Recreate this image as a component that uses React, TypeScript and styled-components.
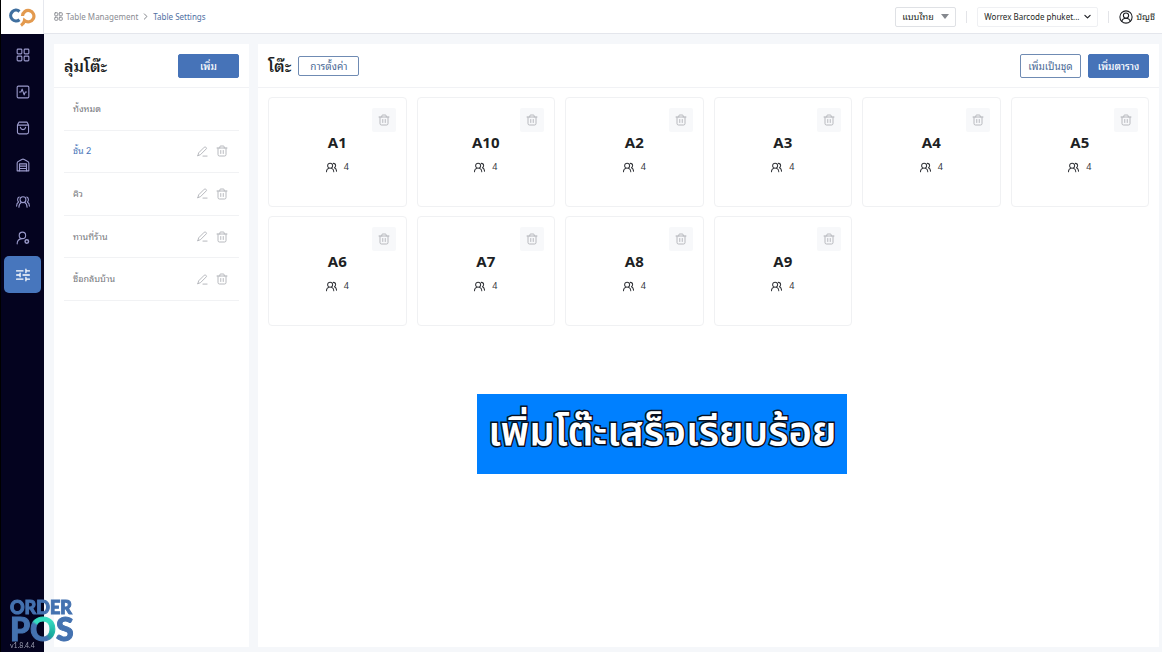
import React from "react";
import styled, { createGlobalStyle, css } from "styled-components";

const blue = "#4673b8";
const sans = `Lato, "Noto Sans Thai Looped", Loma, Waree, "Noto Sans Thai", "Noto Sans", sans-serif`;
const display = `"Noto Sans", "Noto Sans Thai", sans-serif`;

const GlobalStyle = createGlobalStyle`
  *, *::before, *::after { box-sizing: border-box; }
  body { margin: 0; background: #f5f7fa; color: #1d1f24; font: 9px/14px ${sans}; }
  button, select { font: inherit; color: inherit; cursor: pointer; }
  h1, h2, h3, p, ul, ol { margin: 0; padding: 0; }
  ul, ol { list-style: none; }
  a { color: inherit; text-decoration: none; }
`;

const Shell = styled.div`
  display: grid;
  grid-template-columns: 44px minmax(0, 1fr);
  min-height: 100vh;
`;

const Sidebar = styled.aside`
  display: flex;
  flex-direction: column;
  background: #04031f;
  border-left: 1px solid #000;
`;

const Brand = styled.a`
  display: flex;
  align-items: center;
  justify-content: center;
  height: 34px;
  background: #fff;
  border-right: 1px solid #e6e8ee;
`;

const Nav = styled.nav`
  display: grid;
  grid-auto-rows: 1fr;
  height: 256px;
  margin: 3px 3px 0;
`;

const NavLink = styled.a<{ $active?: boolean }>`
  display: flex;
  align-items: center;
  justify-content: center;
  border-radius: 5px;
  color: ${(p) => (p.$active ? "#fff" : "#9a9acb")};
  background: ${(p) => (p.$active ? "#4776bd" : "transparent")};
`;

const Column = styled.div`
  display: flex;
  flex-direction: column;
`;

const TopBar = styled.header`
  display: flex;
  align-items: center;
  justify-content: space-between;
  height: 34px;
  padding: 0 7px 0 10px;
  background: #fff;
  border-bottom: 1px solid #e4e6ec;
`;

const Crumbs = styled.nav`
  display: flex;
  align-items: center;
  gap: 4px;
  color: #6f7279;
  font-family: ${display};
  font-size: 8px;
`;

const Crumb = styled.a<{ $current?: boolean }>`
  display: flex;
  align-items: center;
  gap: 3px;
  color: ${(p) => (p.$current ? "#4f70a3" : "#8a8c92")};
`;

const Tools = styled.div`
  display: flex;
  align-items: center;
  gap: 10px;
`;

const Divider = styled.span`
  width: 1px;
  height: 12px;
  background: #e3e4e8;
`;

const Picker = styled.label<{ $wide?: boolean }>`
  display: grid;
  align-items: center;
  width: ${(p) => (p.$wide ? "121px" : "61px")};
  height: 20px;
  border: 1px solid ${(p) => (p.$wide ? "#eff0f3" : "#dfe1e5")};
  border-radius: 2px;
  ${(p) => p.$wide && css`font-family: ${display}; font-size: 8px;`}

  select, svg { grid-area: 1 / 1; }
  select {
    width: 100%;
    height: 18px;
    padding: 0 14px 0 6px;
    border: 0;
    background: transparent;
    appearance: none;
    text-overflow: ellipsis;
  }
  svg { justify-self: end; margin-right: 6px; pointer-events: none; }
`;

const Account = styled.button`
  display: flex;
  align-items: center;
  gap: 3px;
  padding: 0;
  border: 0;
  background: none;
`;

const Panels = styled.main`
  display: grid;
  grid-template-columns: 195px minmax(0, 1fr);
  flex: 1;
  gap: 9px;
  padding: 10px 3px 5px 10px;
`;

const Panel = styled.section`
  background: #fff;
`;

const PanelHead = styled.div`
  display: flex;
  align-items: center;
  justify-content: space-between;
  height: 44px;
  padding: 0 10px;
  border-bottom: 1px solid #f1f2f5;
`;

const HeadGroup = styled.div`
  display: flex;
  align-items: center;
  gap: 7px;
`;

const Title = styled.h2`
  font-size: 16px;
  line-height: 20px;
  font-weight: 600;
`;

const Button = styled.button<{ $outline?: boolean; $low?: boolean }>`
  width: 61px;
  height: ${(p) => (p.$low ? "20px" : "24px")};
  padding: 0;
  border: 1px solid ${blue};
  border-radius: 2px;
  font-size: 10px;
  white-space: nowrap;
  ${(p) =>
    p.$outline
      ? css`background: #fff; color: #4a6a96; border-color: #6f8bb3;`
      : css`background: ${blue}; color: #fff; font-weight: 500;`}
`;

const Groups = styled.ul`
  display: grid;
  grid-auto-rows: 1fr;
  height: 213px;
  padding: 0 10px;
`;

const GroupRow = styled.li`
  display: flex;
  align-items: center;
  gap: 6px;
  padding: 0 10px 0 9px;
  border-bottom: 1px solid #f1f2f4;
`;

const GroupName = styled.a<{ $active?: boolean }>`
  flex: 1;
  color: ${(p) => (p.$active ? blue : "#75777c")};
`;

const IconButton = styled.button`
  display: flex;
  align-items: center;
  justify-content: center;
  width: 14px;
  height: 14px;
  padding: 0;
  border: 0;
  background: none;
  color: #b0b2b8;
`;

const Cards = styled.ul`
  display: grid;
  grid-template-columns: repeat(6, minmax(0, 1fr));
  gap: 9px 10px;
  padding: 9px 10px;
`;

const Card = styled.li`
  display: flex;
  flex-direction: column;
  align-items: center;
  height: 110px;
  padding: 10px;
  border: 1px solid #f0f1f3;
  border-radius: 4px;
`;

const DeleteButton = styled(IconButton)`
  align-self: flex-end;
  width: 24px;
  height: 24px;
  border-radius: 2px;
  background: #f7f8fa;
`;

const TableName = styled.h3`
  font-family: ${display};
  font-size: 15px;
  line-height: 20px;
  font-weight: 700;
`;

const Seats = styled.p`
  display: flex;
  align-items: center;
  gap: 7px;
  margin-top: 8px;
  color: #33353a;
  font-family: ${display};
`;

const Caption = styled.p`
  position: fixed;
  top: 394px;
  left: 57%;
  width: 370px;
  height: 80px;
  transform: translateX(-50%);
  background: #0080ff;
  color: #fff;
  font-family: ${display};
  font-size: 40px;
  line-height: 74px;
  font-weight: 600;
  text-align: center;
  white-space: nowrap;
  -webkit-text-stroke: 3px #071021;
  paint-order: stroke fill;
`;

const Watermark = styled.div`
  position: fixed;
  left: 10px;
  bottom: 9px;
  display: flex;
  flex-direction: column;
  color: #4472b0;
  font-family: Lato, sans-serif;
  font-weight: 900;
  -webkit-text-stroke: 1px currentColor;
`;

const MarkTop = styled.span`
  font-size: 18px;
  line-height: 16px;
`;

const MarkBottom = styled.span`
  font-size: 32px;
  line-height: 28px;
`;

const MarkRing = styled.span`
  background: conic-gradient(from -50deg, #35dcc0 0 25%, #17a99d 50%, #4472b0 58% 96%, #35dcc0);
  background-clip: text;
  color: transparent;
`;

const Version = styled.small`
  position: fixed;
  left: 10px;
  bottom: 2px;
  color: #9d9fb2;
  font-size: 7px;
  line-height: 10px;
`;

type IconProps = { size?: number; children: React.ReactNode; weight?: number };

const Icon = ({ size = 14, weight = 1.5, children }: IconProps) => (
  <svg width={size} height={size} viewBox="0 0 24 24" fill="none" stroke="currentColor"
    strokeWidth={weight} strokeLinecap="round" strokeLinejoin="round" aria-hidden="true">
    {children}
  </svg>
);

const grid = (
  <>
    <rect x="2" y="2" width="8" height="8" rx="1.500" />
    <rect x="14" y="2" width="8" height="8" rx="1.500" />
    <rect x="2" y="14" width="8" height="8" rx="1.500" />
    <rect x="14" y="14" width="8" height="8" rx="1.500" />
  </>
);

const Trash = () => (
  <Icon size={12} weight={1.8}>
    <path d="M2 6h20M7.500 6V4a2 2 0 0 1 2-2h5a2 2 0 0 1 2 2v2M4 6v13a3 3 0 0 0 3 3h10a3 3 0 0 0 3-3V6M9.500 11v6M14.500 11v6" />
  </Icon>
);

const Pencil = () => (
  <Icon size={11} weight={2}>
    <path d="M2 21l1.500-6L16 2.500a2 2 0 0 1 3 0l1 1a2 2 0 0 1 0 3L7.500 19 2 21zM13 22h9" />
  </Icon>
);

const People = () => (
  <Icon size={11} weight={2.2}>
    <circle cx="9" cy="8" r="5.500" />
    <path d="M1 21c0-4 2-6.500 5-7.500M12 13.500c3 1 5 3.500 5 7.500M16 3c3.500 0 5 2 5 4.500 0 2.500-1 4-2.500 5 3 1.500 4.500 4 4.500 7.500" />
  </Icon>
);

const navItems = [
  { label: "Dashboard", icon: grid },
  {
    label: "Activity",
    icon: <><rect x="2" y="2" width="20" height="20" rx="2" /><path d="M6 12h2.500l2-5 3.500 10 2-5h2" /></>,
  },
  {
    label: "Orders",
    icon: <><path d="M2.500 7 5 2h14l2.500 5v12a3 3 0 0 1-3 3h-13a3 3 0 0 1-3-3zM2.500 7h19" /><path d="M7.500 11c1 5 8 5 9 0" /></>,
  },
  {
    label: "Stock",
    icon: <><path d="M2 8.500C2 7 3 6 4.500 5.500L10 2.500q2-1 4 0l5.500 3C21 6 22 7 22 8.500V22H2z" /><path d="M6 22V10h12v12M6 14h12M6 18h12" /></>,
  },
  {
    label: "Customers",
    icon: <><circle cx="12" cy="8" r="5" /><path d="M5 21c0-4 2-7 4.500-8.500M19 21c0-4-2-7-4.500-8.500M5.500 3.500C2 5 2 10 4.500 12 2 13.500 1 16 1 19M18.500 3.500C22 5 22 10 19.500 12c2.500 1.500 3.500 4 3.500 7" /></>,
  },
  {
    label: "Staff",
    icon: <><circle cx="11" cy="7.500" r="5.500" /><path d="M2 22c0-5 3-8.500 8-9" /><circle cx="18.500" cy="18" r="3" strokeWidth="2.500" /></>,
  },
  {
    label: "Settings",
    icon: <><path strokeWidth="2.200" d="M1 5h11M17 5h6M17 2v6M1 12h6M12 12h11M7 9v6M1 19h11M17 19h6M17 16v6" /></>,
  },
];

const groups = ["ทั้งหมด", "ชั้น 2", "คิว", "ทานที่ร้าน", "ซื้อกลับบ้าน"];
const tables = ["A1", "A10", "A2", "A3", "A4", "A5", "A6", "A7", "A8", "A9"];

export default function App() {
  return (
    <>
      <GlobalStyle />
      <Shell>
        <Sidebar>
          <Brand href="#" aria-label="Home">
            <svg width="28" height="20" viewBox="0 0 28 20" fill="none" strokeWidth="3.200" aria-hidden="true">
              <path d="M11.500 4.400A5.400 5.400 0 1 0 11.500 12.800" stroke="#3f6f9f" />
              <path d="M13 18.500q3-2 3.500-5a5.700 5.700 0 1 0-2-4.500" stroke="#e39a4f" />
            </svg>
          </Brand>
          <Nav aria-label="Main">
            {navItems.map((item) => (
              <NavLink key={item.label} href="#" aria-label={item.label} $active={item.label === "Settings"}>
                <Icon weight={1.9}>{item.icon}</Icon>
              </NavLink>
            ))}
          </Nav>
        </Sidebar>
        <Column>
          <TopBar>
            <Crumbs aria-label="Breadcrumb">
              <Crumb href="#"><Icon size={9} weight={2.5}>{grid}</Icon>Table Management</Crumb>
              <Icon size={7} weight={3}><path d="M8 3l9 9-9 9" /></Icon>
              <Crumb href="#" $current>Table Settings</Crumb>
            </Crumbs>
            <Tools>
              <Picker>
                <select aria-label="Language"><option>แบบไทย</option></select>
                <svg width="8" height="5" viewBox="0 0 8 5" aria-hidden="true"><path d="M0 0h8L4 5z" fill="#85888e" /></svg>
              </Picker>
              <Divider />
              <Picker $wide>
                <select aria-label="Branch"><option>Worrex Barcode phuket...</option></select>
                <Icon size={7} weight={4}><path d="M3 8l9 9 9-9" /></Icon>
              </Picker>
              <Divider />
              <Account>
                <Icon size={14} weight={1.8}>
                  <circle cx="12" cy="12" r="10.500" /><circle cx="12" cy="9.500" r="4.500" />
                  <path d="M5 19.500c.500-3.500 3.500-5.500 7-5.500s6.500 2 7 5.500" />
                </Icon>
                บัญชี
              </Account>
            </Tools>
          </TopBar>
          <Panels>
            <Panel>
              <PanelHead>
                <Title>ลุ่มโต๊ะ</Title>
                <Button>เพิ่ม</Button>
              </PanelHead>
              <Groups>
                {groups.map((name, i) => (
                  <GroupRow key={name}>
                    <GroupName href="#" $active={i === 1}>{name}</GroupName>
                    {i > 0 && (
                      <>
                        <IconButton aria-label="Edit"><Pencil /></IconButton>
                        <IconButton aria-label="Delete"><Trash /></IconButton>
                      </>
                    )}
                  </GroupRow>
                ))}
              </Groups>
            </Panel>
            <Panel>
              <PanelHead>
                <HeadGroup>
                  <Title>โต๊ะ</Title>
                  <Button $outline $low>การตั้งค่า</Button>
                </HeadGroup>
                <HeadGroup>
                  <Button $outline>เพิ่มเป็นชุด</Button>
                  <Button>เพิ่มตาราง</Button>
                </HeadGroup>
              </PanelHead>
              <Cards>
                {tables.map((name) => (
                  <Card key={name}>
                    <DeleteButton aria-label={`Delete ${name}`}><Trash /></DeleteButton>
                    <TableName>{name}</TableName>
                    <Seats><People />4</Seats>
                  </Card>
                ))}
              </Cards>
            </Panel>
          </Panels>
        </Column>
      </Shell>
      <Caption>เพิ่มโต๊ะเสร็จเรียบร้อย</Caption>
      <Watermark>
        <MarkTop>ORDER</MarkTop>
        <MarkBottom>P<MarkRing>O</MarkRing>S</MarkBottom>
      </Watermark>
      <Version>v1.8.4.4</Version>
    </>
  );
}
